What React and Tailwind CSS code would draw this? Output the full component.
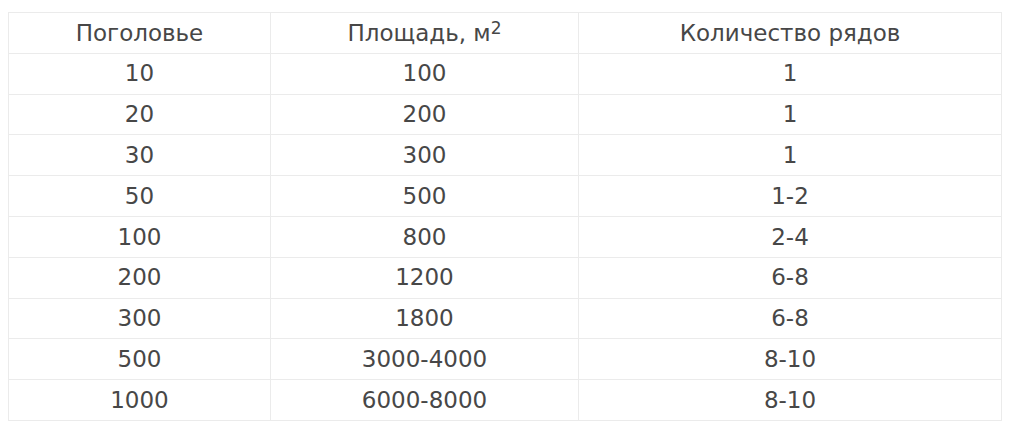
const rows = [
  ["10", "100", "1"],
  ["20", "200", "1"],
  ["30", "300", "1"],
  ["50", "500", "1-2"],
  ["100", "800", "2-4"],
  ["200", "1200", "6-8"],
  ["300", "1800", "6-8"],
  ["500", "3000-4000", "8-10"],
  ["1000", "6000-8000", "8-10"],
];

const cell = "border border-[#ebebeb] text-center align-middle p-0 h-[40.8px]";

const App = () => {
  return (
    <div className="w-[1024px] h-[437px] bg-white pt-[12px] pl-[8px] font-['DejaVu_Sans',Verdana,sans-serif] text-[23px] text-[#474747]">
      <table className="border-collapse w-[993px] table-fixed">
        <colgroup>
          <col className="w-[262px]" />
          <col className="w-[308px]" />
          <col className="w-[423px]" />
        </colgroup>
        <tbody>
          <tr>
            <td className={cell}>Поголовье</td>
            <td className={cell}>
              Площадь, м
              <sup className="text-[17px] top-[-7px]">2</sup>
            </td>
            <td className={cell}>Количество рядов</td>
          </tr>
          {rows.map((r) => (
            <tr key={r[0]}>
              {r.map((v, i) => (
                <td key={i} className={cell}>
                  {v.replace("-", "\u2011")}
                </td>
              ))}
            </tr>
          ))}
        </tbody>
      </table>
    </div>
  );
};

export default App;
